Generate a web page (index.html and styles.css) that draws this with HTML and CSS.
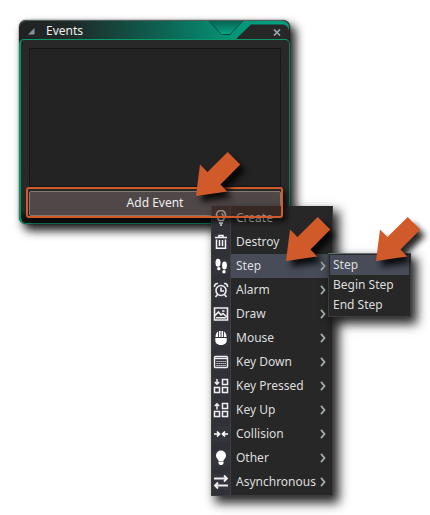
FILE: index.html
```html
<!DOCTYPE html>
<html lang="en">
<head>
<meta charset="utf-8">
<title>Events</title>
<link rel="stylesheet" href="styles.css">
</head>
<body>
<main class="desktop">
  <section class="window">
    <header class="titlebar">
      <svg class="titlebar-art" width="270" height="19" viewBox="0 0 270 19">
        <defs><linearGradient id="tab" x1="0" y1="0" x2="0" y2="1"><stop offset="0" stop-color="#075e4d"/><stop offset="1" stop-color="#07a685"/></linearGradient></defs>
        <path d="M216 19L231 4.500H263Q268 5 269 11V19Z" fill="#272727"/>
        <path d="M188 0H224L210 14.500H201Z" fill="url(#tab)"/>
        <path d="M188 0L201.500 14.500H210L224 0" fill="none" stroke="#074c40"/>
      </svg>
      <svg class="collapse" width="7" height="7" viewBox="0 0 7 7"><path d="M6.500 0V6.500H0Z" fill="#89919a"/></svg>
      <span class="title">Events</span>
      <svg class="close" width="8" height="7" viewBox="0 0 8 7"><path d="M1 .5L7 6.500M7 .5L1 6.500" stroke="#9ba5af" stroke-width="1.700"/></svg>
    </header>
    <div class="window-body">
      <div class="event-list"></div>
      <div class="add-event">Add Event</div>
    </div>
  </section>

  <nav class="menu">
    <div class="item"><span class="icon"><svg viewBox="0 0 16 16"><path d="M6 10.500C5.500 8.500 3.500 8 3.500 5a4.500 4.500 0 0 1 9 0c0 3-2 3.500-2.500 5.500z" fill="none" stroke="#eee" stroke-width="1.700"/><path d="M6 13h4M7 15h2M8.500 3.500Q10 4 10 6" fill="none" stroke="#eee" stroke-width="1.500"/></svg></span><span>Create</span></div>
    <div class="item"><span class="icon"><svg viewBox="0 0 16 16"><path d="M2 3.500h12M6 3V1.500h4v1.500M3.500 5.500V14.200h9v-8.700M6.500 6v6M9.500 6v6" fill="none" stroke="#f4f4f4" stroke-width="1.500"/></svg></span><span>Destroy</span></div>
    <div class="item active"><span class="icon"><svg viewBox="0 0 16 16" fill="#fff"><ellipse cx="5" cy="4.700" rx="2.500" ry="4"/><ellipse cx="5.800" cy="10.700" rx="1.700" ry="1.600"/><ellipse cx="11.500" cy="7.500" rx="2.400" ry="4"/><ellipse cx="11" cy="13.700" rx="1.700" ry="1.700"/></svg></span><span>Step</span><svg class="chevron" viewBox="0 0 6 10"><path d="M1 .8L4.500 5L1 9.200"/></svg></div>
    <div class="item"><span class="icon"><svg viewBox="0 0 16 16" fill="none" stroke="#eee" stroke-width="1.600"><circle cx="8" cy="8.500" r="5"/><path d="M8 5.500V9H11M1.500 5A3 3 0 0 1 5 1.500M11 1.500A3 3 0 0 1 14.500 5M4.500 12.500L2.500 15M11.500 12.500L13.500 15"/></svg></span><span>Alarm</span><svg class="chevron" viewBox="0 0 6 10"><path d="M1 .8L4.500 5L1 9.200"/></svg></div>
    <div class="item"><span class="icon"><svg viewBox="0 0 16 16" fill="none" stroke="#eee" stroke-width="1.600"><path d="M1.500 2h13v12h-13zM2 9.500L5.500 6 8 9l2-1.500L14 11M3 11.800h10M9 5h2.500"/></svg></span><span>Draw</span><svg class="chevron" viewBox="0 0 6 10"><path d="M1 .8L4.500 5L1 9.200"/></svg></div>
    <div class="item"><span class="icon"><svg viewBox="0 0 16 16" fill="#fff"><path d="M2.500 7C2.500 3.500 4 2 5.100 1.500V7zM6 1h1.600v6H6zM8.500 1h1.600v6H8.500zM11 1.500C12 2 13.500 3.500 13.500 7H11zM2.300 8h11.400v2.500c0 6-11.400 6-11.400 0z"/></svg></span><span>Mouse</span><svg class="chevron" viewBox="0 0 6 10"><path d="M1 .8L4.500 5L1 9.200"/></svg></div>
    <div class="item"><span class="icon"><svg viewBox="0 0 16 16" fill="none" stroke="#eee"><rect x="1.500" y="2.500" width="13" height="11" rx="1" stroke-width="1.400"/><path d="M2 4.500h12" stroke-width="1.400"/><path d="M3.500 7.500h9.500M3.500 9.500h9.500M3.500 11.500h9.500" stroke-width="1.200" stroke-dasharray="1.200 .8"/></svg></span><span>Key Down</span><svg class="chevron" viewBox="0 0 6 10"><path d="M1 .8L4.500 5L1 9.200"/></svg></div>
    <div class="item"><span class="icon"><svg viewBox="0 0 16 16" fill="none" stroke="#eee" stroke-width="1.500"><path d="M9.500 1.500h5v5h-5zM9.500 9.500h5v5h-5zM1.500 9.500h5v5h-5zM4 1v5M1.800 4L4 6.200 6.200 4"/></svg></span><span>Key Pressed</span><svg class="chevron" viewBox="0 0 6 10"><path d="M1 .8L4.500 5L1 9.200"/></svg></div>
    <div class="item"><span class="icon"><svg viewBox="0 0 16 16" fill="none" stroke="#eee" stroke-width="1.500"><path d="M9.500 1.500h5v5h-5zM9.500 9.500h5v5h-5zM1.500 9.500h5v5h-5zM4 7.500V2M1.800 4L4 1.800 6.200 4"/></svg></span><span>Key Up</span><svg class="chevron" viewBox="0 0 6 10"><path d="M1 .8L4.500 5L1 9.200"/></svg></div>
    <div class="item"><span class="icon"><svg viewBox="0 0 16 16" fill="none" stroke="#fff" stroke-width="1.700"><path d="M1 8h5M15 8h-5M4 5.500L6.500 8 4 10.500M12 5.500L9.500 8 12 10.500"/></svg></span><span>Collision</span><svg class="chevron" viewBox="0 0 6 10"><path d="M1 .8L4.500 5L1 9.200"/></svg></div>
    <div class="item"><span class="icon"><svg viewBox="0 0 16 16" fill="#fff"><path d="M5.500 11C5.500 9 3 8.500 3 5.500a5 5 0 0 1 10 0C13 8.500 10.500 9 10.500 11zM5.500 11.500h5v2L9.200 15H6.800L5.500 13.500z"/></svg></span><span>Other</span><svg class="chevron" viewBox="0 0 6 10"><path d="M1 .8L4.500 5L1 9.200"/></svg></div>
    <div class="item"><span class="icon"><svg viewBox="0 0 16 16" fill="none" stroke="#eee" stroke-width="1.800"><path d="M1 4.500h13M11 1.500l3 3-3 3M15 11.500H2M5 8.500l-3 3 3 3"/></svg></span><span>Asynchronous</span><svg class="chevron" viewBox="0 0 6 10"><path d="M1 .8L4.500 5L1 9.200"/></svg></div>
  </nav>

  <nav class="submenu">
    <div class="subitem active">Step</div>
    <div class="subitem">Begin Step</div>
    <div class="subitem">End Step</div>
  </nav>

  <div class="highlight"></div>
  <svg class="arrows" width="430" height="515" viewBox="0 0 430 515">
    <defs><path id="arrow" d="M196 196L200 164.500L207.500 172L227.700 152L240.300 164.500L220.500 184.500L227.300 191.500Z"/></defs>
    <g fill="#d15a2a"><use href="#arrow"/><use href="#arrow" x="90" y="65"/><use href="#arrow" x="180" y="65"/></g>
  </svg>
</main>
</body>
</html>
```
FILE: styles.css
```css
* { box-sizing: border-box; }
body {
  margin: 0;
  background: #fff;
  color: #dedede;
  font: 12px/18px "Noto Sans", "Open Sans", sans-serif;
}
.desktop { position: relative; width: 430px; height: 515px; overflow: hidden; padding: 20px 0 0 19px; }
.window {
  width: 271px;
  height: 204px;
  border-radius: 7px;
  background: #222;
  box-shadow: 5px 6px 10px 1px rgba(0,0,0,.85), 0 0 2px rgba(0,0,0,.6);
}
.titlebar {
  position: relative;
  display: flex;
  align-items: center;
  height: 19px;
  margin: 0 1px;
  padding: 2px 8px 0 8px;
  border-top: 1px solid #50605c;
  border-radius: 7px 7px 0 0;
  overflow: hidden;
  background: linear-gradient(90deg, #202222 0, #1e2b29 20%, #0d6554 54%, #04967a 80%, #04a080);
}
.titlebar-art { position: absolute; left: 0; top: -1px; }
.collapse { margin-right: 11px; }
.title { color: #eee; }
.close { position: relative; margin-left: auto; margin-top: 3px; }
.window-body {
  height: 185px;
  padding: 8px 8px;
  border: 1px solid #087f57;
  border-top-color: #0a9969;
  border-left: 2px solid #06935f;
  border-radius: 5px 5px 7px 7px;
  background: linear-gradient(#282828 0, #292929 93%, #101010 98%);
}
.event-list { height: 139px; border: 1px solid #171717; background: #232323; }
.add-event {
  height: 25px;
  margin-top: 4px;
  border: 1px solid #877970;
  border-radius: 2px;
  background: #504748;
  color: #eee;
  line-height: 22px;
  text-align: center;
}
.menu {
  position: absolute;
  left: 211px;
  top: 206px;
  width: 122px;
  height: 290px;
  border: 1px solid #3c3c3c;
  border-top: 0;
  background: linear-gradient(90deg, #303137 0 18px, #414141 18px 19px, #272727 19px);
  box-shadow: 5px 6px 10px 1px rgba(0,0,0,.85);
}
.item { display: flex; align-items: center; height: 24px; padding-right: 6px; }
.item.active { background: linear-gradient(90deg, transparent 19px, #474c58 19px); }
.icon { display: flex; width: 24px; padding-left: 1px; }
.icon svg { width: 16px; height: 16px; background: #34353c; }
.chevron {
  width: 6px;
  height: 10px;
  margin-left: auto;
  fill: none;
  stroke: #a4afa9;
  stroke-width: 1.8px;
}
.submenu {
  position: absolute;
  left: 328px;
  top: 253px;
  width: 83px;
  height: 64px;
  padding: 1px;
  border: 1px solid #3d3d3d;
  border-top-color: #66706e;
  background: #272727;
  box-shadow: 5px 6px 10px 1px rgba(0,0,0,.85);
}
.subitem { height: 20px; padding-left: 3px; line-height: 20px; }
.subitem.active { background: #474c58; }
.highlight {
  position: absolute;
  left: 26px;
  top: 187px;
  width: 257px;
  height: 31px;
  border: 2px solid #d15a2a;
  border-radius: 3px;
  background: linear-gradient(90deg, transparent 184px, rgba(70,40,32,.5) 184px) 0 17px no-repeat;
  box-shadow: 4px 4px 5px rgba(0,0,0,.6);
}
.arrows { position: absolute; left: 0; top: 0; filter: drop-shadow(5px 6px 3px rgba(0,0,0,.85)); }
```
